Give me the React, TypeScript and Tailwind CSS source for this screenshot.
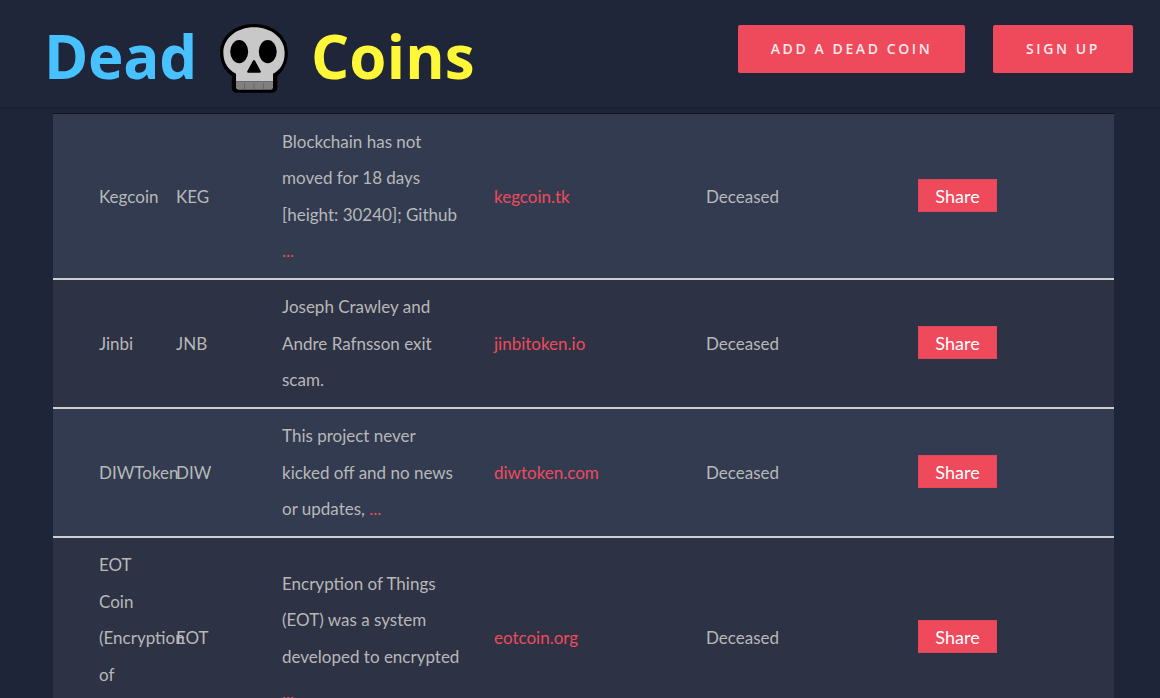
import React from "react";

type Coin = {
  name: string;
  symbol: string;
  desc: string;
  more?: boolean;
  site: string;
};

const coins: Coin[] = [
  {
    name: "Kegcoin",
    symbol: "KEG",
    desc: "Blockchain has not moved for 18 days [height: 30240]; Github",
    more: true,
    site: "kegcoin.tk",
  },
  {
    name: "Jinbi",
    symbol: "JNB",
    desc: "Joseph Crawley and Andre Rafnsson exit scam.",
    site: "jinbitoken.io",
  },
  {
    name: "DIWToken",
    symbol: "DIW",
    desc: "This project never kicked off and no news or updates,",
    more: true,
    site: "diwtoken.com",
  },
  {
    name: "EOT Coin (Encryption of Things)",
    symbol: "EOT",
    desc: "Encryption of Things (EOT) was a system developed to encrypted",
    more: true,
    site: "eotcoin.org",
  },
];

const Skull = () => (
  <svg viewBox="6 4 68 70" className="w-[72px] h-[74px] shrink-0 block">
    <path
      d="M40 6C22 6 8 17 8 33c0 10 4 17 11 22v11c0 3 2 5 5 5h33c3 0 5-2 5-5V55c6-5 10-12 10-22C72 17 58 6 40 6z"
      fill="#000"
    />
    <path
      d="M40 9C24 9 11 19 11 33c0 10 5 16 12 20v7h35v-7c7-4 11-10 11-20C69 19 56 9 40 9z"
      fill="#c8c8c8"
    />
    <path d="M23 60h35v6c0 1-1 2-2 2H25c-1 0-2-1-2-2z" fill="#808080" />
    <path d="M31 62v6M40 62v6M49 62v6" stroke="#666" strokeWidth="1" />
    <ellipse cx="26" cy="32" rx="8.5" ry="11" fill="#000" />
    <ellipse cx="53" cy="32" rx="8.5" ry="11" fill="#000" />
    <path
      d="M40 41l5.5 10h-11z"
      fill="#000"
      stroke="#000"
      strokeWidth="2"
      strokeLinejoin="round"
    />
  </svg>
);

export default function App() {
  return (
    <div className="h-[698px] overflow-hidden bg-[#1f2539] font-['Lato',sans-serif] text-[17px] leading-[36.5px] text-[#b8b8b8]">
      {/* Header */}
      <header className="h-[107px] bg-[#20263a] flex items-start justify-between pl-[44px] pr-[27px] shadow-[0_1px_3px_rgba(0,0,0,0.3)]">
        <div className="flex items-start h-[100px] pt-[16px] font-['Open_Sans',sans-serif] font-bold text-[60px] leading-[80px]">
          <span className="text-[#47c1ff] tracking-[-0.3px]">Dead</span>
          <span className="ml-[21px] mr-[21px] mt-[6px]">
            <Skull />
          </span>
          <span className="text-[#fff838] tracking-[0.2px]">Coins</span>
        </div>
        <div className="flex gap-[28px] pt-[25px] font-['Open_Sans',sans-serif] text-[14px] font-semibold tracking-[0.185em] text-[#fde8ea]">
          <button className="w-[227px] h-[48px] bg-[#ef4a5c] rounded-[2px] uppercase">
            Add a dead coin
          </button>
          <button className="w-[140px] h-[48px] bg-[#ef4a5c] rounded-[2px] uppercase">
            Sign up
          </button>
        </div>
      </header>

      {/* Table */}
      <main className="mx-[53px] w-[1061px] mt-[6px] border-t border-t-[#12141c]">
        <table className="w-full table-fixed border-collapse">
          <colgroup>
            <col className="w-[123px]" />
            <col className="w-[106px]" />
            <col className="w-[212px]" />
            <col className="w-[212px]" />
            <col className="w-[212px]" />
            <col />
          </colgroup>
          <tbody>
            {coins.map((coin) => (
              <tr
                key={coin.symbol}
                className="odd:bg-[#323b50] even:bg-[#2d3245] border-b-2 border-b-[#cfcfcf]"
              >
                <td className="pl-[46px] pr-[15px] pt-[9.75px] pb-[7.75px] align-middle">{coin.name}</td>
                <td className="pt-[9.75px] pb-[7.75px] align-middle">{coin.symbol}</td>
                <td className="pr-[32px] pt-[9.75px] pb-[7.75px] align-middle">
                  {coin.desc}
                  {coin.more && <span className="text-[#ef4a5c]"> ...</span>}
                </td>
                <td className="pt-[9.75px] pb-[7.75px] align-middle text-[#ef4a5c]">{coin.site}</td>
                <td className="pt-[9.75px] pb-[7.75px] align-middle">Deceased</td>
                <td className="pt-[9.75px] pb-[7.75px] align-middle">
                  <button className="w-[79px] h-[33px] bg-[#ef4a5c] text-white text-[18px] leading-[33px] border border-[#c8465a]/40">
                    Share
                  </button>
                </td>
              </tr>
            ))}
          </tbody>
        </table>
      </main>
    </div>
  );
}
